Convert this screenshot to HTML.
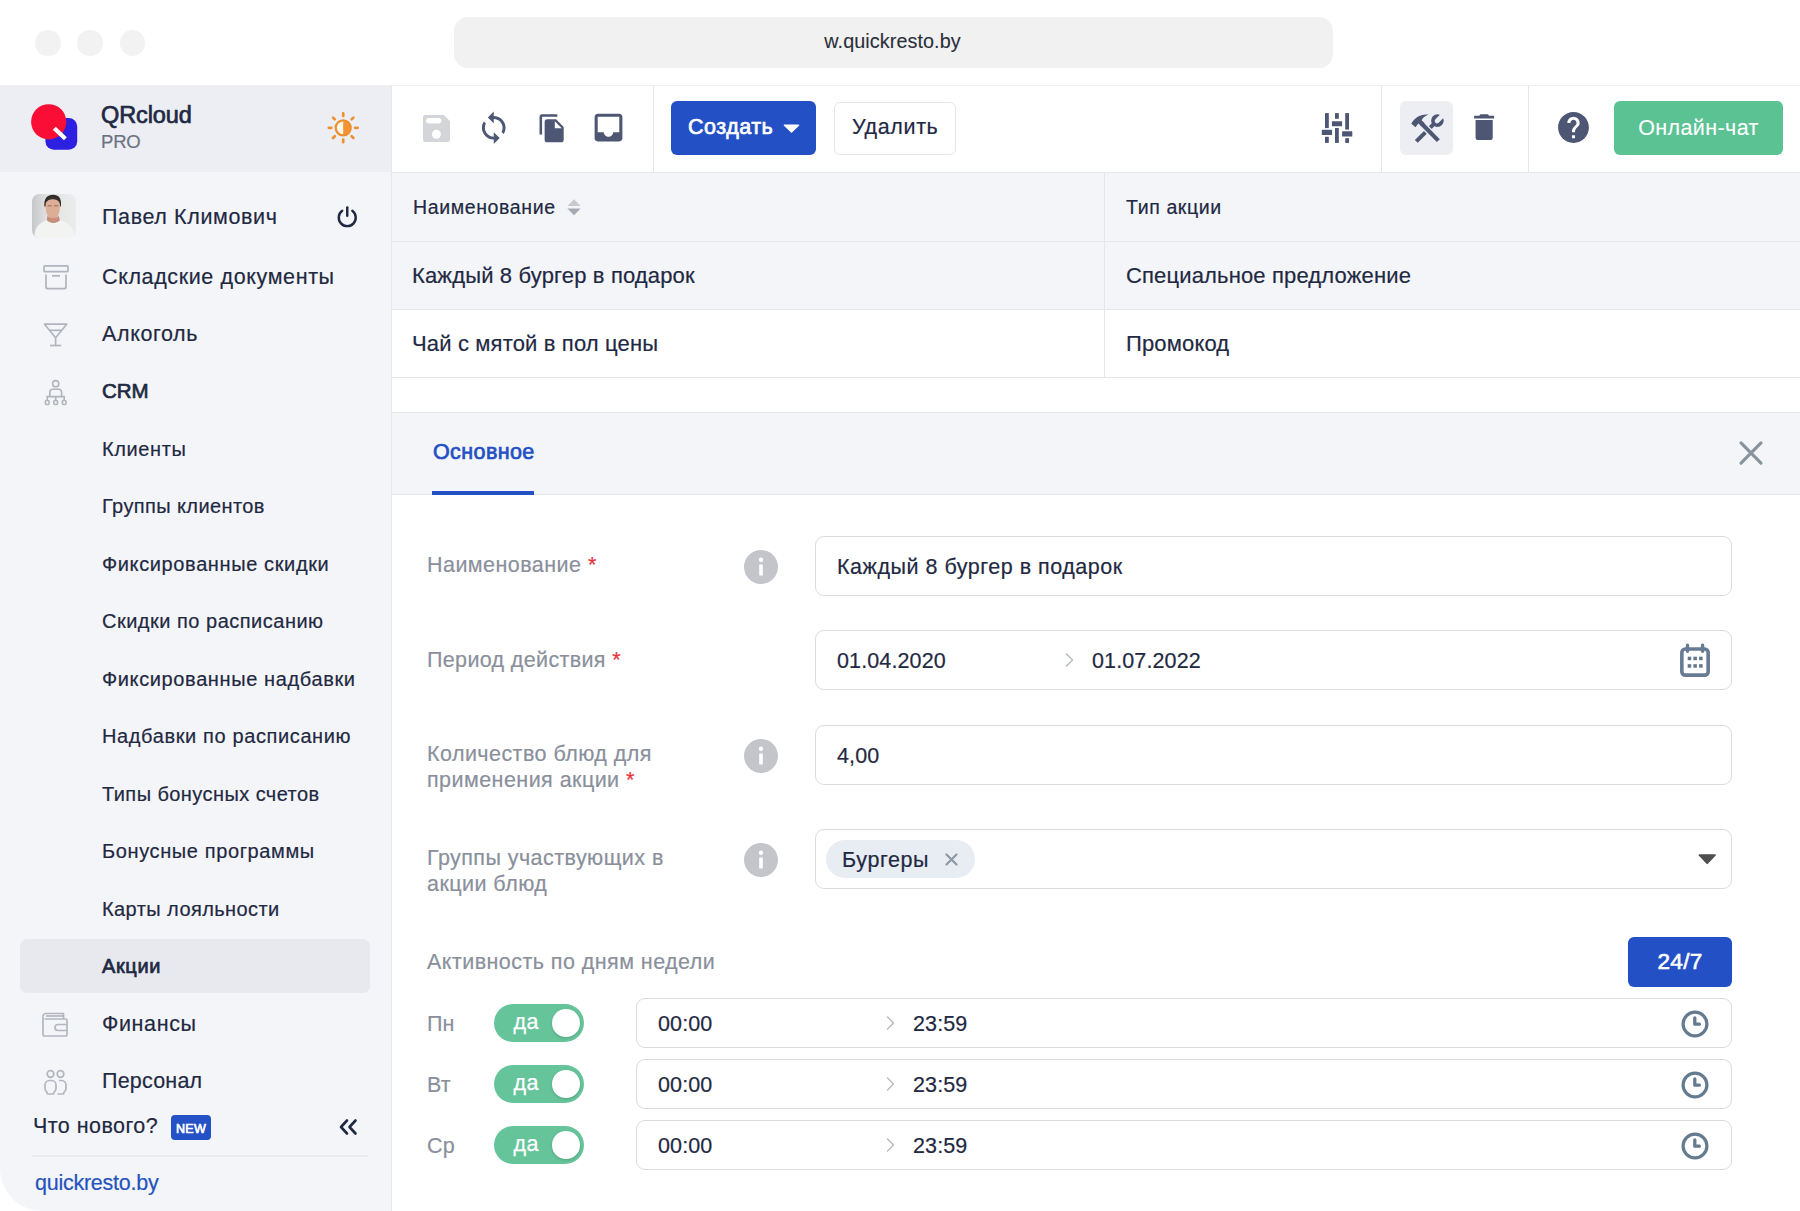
<!DOCTYPE html>
<html lang="ru">
<head>
<meta charset="utf-8">
<title>QRcloud PRO</title>
<style>
html,body{margin:0;padding:0;background:#fff;}
body{width:1800px;height:1211px;position:relative;overflow:hidden;font-family:"Liberation Sans",sans-serif;color:#1f2942;}
.abs{position:absolute;}
.t{position:absolute;white-space:nowrap;line-height:1;transform:translateY(-41%);letter-spacing:0.62px;-webkit-text-stroke:0.2px currentColor;}
.b{font-weight:normal;-webkit-text-stroke:0.7px currentColor;}
.dot{position:absolute;width:25.500px;height:25.500px;border-radius:50%;background:#f2f2f2;top:30.300px;}
#url{position:absolute;left:454px;top:17px;width:878.500px;height:50.800px;border-radius:14px;background:#f1f1f1;}
#side{position:absolute;left:0;top:85px;width:391px;height:1126px;background:#f4f5f9;border-bottom-left-radius:42px;}
#sidehead{position:absolute;left:0;top:0;width:391px;height:87px;background:#eceef4;}
#main{position:absolute;left:391px;top:85px;width:1409px;height:1126px;background:#fff;border-left:1px solid #e6e8ed;box-sizing:border-box;}
.m{font-size:21.5px;left:102px;}
.s{font-size:20px;left:102px;}
.hl{position:absolute;height:1px;background:#e5e6ea;}
.vl{position:absolute;width:1px;background:#e5e6ea;}
.inp{position:absolute;box-sizing:border-box;border:1.5px solid #dadcde;border-radius:9px;background:#fff;}
.lab{color:#8a8f9c;font-size:21.5px;left:427px;letter-spacing:0.45px;}
.num{letter-spacing:0.12px;}
.red{color:#e5343d;}
.val{font-size:21.5px;}
.tog{position:absolute;left:493.600px;width:90.800px;height:37.600px;border-radius:19px;background:#66c49a;margin-top:0.200px;}
.tog i{position:absolute;right:4.700px;top:4.800px;width:27.600px;height:27.600px;border-radius:50%;background:#fff;box-shadow:0 1px 3px rgba(0,0,0,0.180);}
.tog span{position:absolute;left:20px;top:50%;transform:translateY(-49%);color:#fff;font-size:21.500px;line-height:1;letter-spacing:0.300px;-webkit-text-stroke:0.250px #fff;}
.day{color:#8a8f9c;font-size:21.5px;left:427px;letter-spacing:0.100px;}
svg{position:absolute;overflow:visible;}
</style>
</head>
<body>
<!-- browser chrome -->
<div class="dot" style="left:35px"></div><div class="dot" style="left:77.300px"></div><div class="dot" style="left:119.800px"></div>
<div id="url"><span class="t" style="left:0;width:877px;text-align:center;top:23px;font-size:19.800px;letter-spacing:0.080px;color:#2a2f3a;-webkit-text-stroke:0.100px #2a2f3a;">w.quickresto.by</span></div>

<!-- SIDEBAR -->
<div id="side">
<div id="sidehead"></div>
</div>
<!-- logo -->
<svg style="left:28px;top:100px" width="56" height="56" viewBox="0 0 56 56">
<rect x="17.400" y="18" width="31.800" height="31.800" rx="8.500" fill="#2d20e0"/>
<circle cx="20.700" cy="21.800" r="17.600" fill="#fb0e35"/>
<path d="M26.300 28.200L37.400 38.700" stroke="#fff" stroke-width="4.200" stroke-linecap="butt"/>
</svg>
<span class="t b" style="left:101px;top:114px;font-size:23.5px;letter-spacing:-0.1px;">QRcloud</span>
<span class="t" style="left:101px;top:141px;font-size:18.5px;color:#6d7280;letter-spacing:-0.2px;">PRO</span>
<!-- sun -->
<svg style="left:325px;top:110px" width="36" height="36" viewBox="0 0 36 36">
<circle cx="18.2" cy="17.8" r="7.500" fill="#fff7ec"/>
<path d="M18.2 10.3a7.500 7.500 0 0 1 0 15z" fill="#f59332"/>
<g stroke="#ee9030" stroke-width="2.300" stroke-linecap="round" fill="none">
<circle cx="18.2" cy="17.8" r="7.500"/>
<path d="M30.10 17.80L32.60 17.80M26.61 26.21L28.38 27.98M18.20 29.70L18.20 32.20M9.79 26.21L8.02 27.98M6.30 17.80L3.80 17.80M9.79 9.39L8.02 7.62M18.20 5.90L18.20 3.40M26.61 9.39L28.38 7.62" stroke-width="2.700"/>
</g>
</svg>
<!-- avatar -->
<svg style="left:32px;top:194px" width="44" height="44" viewBox="0 0 44 44">
<defs><linearGradient id="avg" x1="0" y1="0" x2="1" y2="0"><stop offset="0" stop-color="#c6c7ca"/><stop offset="0.350" stop-color="#e2e2e3"/><stop offset="1" stop-color="#ececec"/></linearGradient>
<clipPath id="avc"><rect width="44" height="44" rx="7.500"/></clipPath></defs>
<g clip-path="url(#avc)">
<rect width="44" height="44" fill="url(#avg)"/>
<path d="M12.400 12.500C11.500 4.500 15.500 0.800 21 0.800S30 4.500 28.800 12.500z" fill="#2e2c28"/>
<path d="M13.600 11C13.600 6.500 16.500 4.800 20.800 4.800S28 6.500 28 11C28.300 18 26 24.800 20.800 24.800S13.300 18 13.600 11z" fill="#dcae96"/>
<path d="M13.600 9.500C15 6 18 5.200 20.800 5.200S26.500 6 28 9.500C27 4 24 3 20.800 3S14.500 4 13.600 9.500z" fill="#3a322c"/>
<path d="M15.500 21.500C17 25 24.500 25 26.500 21.500L28.500 28L21 32L14.500 27z" fill="#c58f78"/>
<path d="M2.500 44C2.500 33 6 30.500 14.800 25.800C17 30 25.500 30 28.300 25.800C37 30 41.500 33 42.500 44z" fill="#f3f3f1"/>
<path d="M15.800 11.800h4M22 11.800h4" stroke="#8a6a5a" stroke-width="0.900"/>
</g>
</svg>
<span class="t m" style="top:216px;">Павел Климович</span>
<!-- power -->
<svg style="left:335px;top:204.500px" width="24.500" height="24.500" viewBox="0 0 26 26" fill="none" stroke="#1f2942" stroke-width="2.6" stroke-linecap="round">
<path d="M13 2.5v9"/><path d="M7.6 6.2a9 9 0 1 0 10.8 0"/>
</svg>
<!-- box icon -->
<svg style="left:42px;top:263px" width="28" height="28" viewBox="0 0 28 28" fill="none" stroke="#b1b4bc" stroke-width="1.700">
<rect x="2" y="2.900" width="24" height="5.800" rx="0.900"/><path d="M4 11.500v12.200a2 2 0 0 0 2 2h16a2 2 0 0 0 2-2V11.500"/><path d="M10 12.800h8"/>
</svg>
<span class="t m" style="top:276px;">Складские документы</span>
<!-- cocktail -->
<svg style="left:43px;top:322px" width="26" height="26" viewBox="0 0 26 26" fill="none" stroke="#b1b4bc" stroke-width="1.700" stroke-linejoin="round">
<path d="M1.500 2.200h22.200L12.600 15.800z"/><path d="M6.500 8.300h12.200"/><path d="M12.600 15.800v7.500"/><path d="M7 23.500h11.200"/>
</svg>
<span class="t m" style="top:333px;">Алкоголь</span>
<!-- crm -->
<svg style="left:43px;top:379px" width="26" height="28" viewBox="0 0 26 28" fill="none" stroke="#b1b4bc" stroke-width="1.600">
<circle cx="12.700" cy="4.700" r="3.100"/><path d="M6.800 17v-3.800a3 3 0 0 1 3-3h5.800a3 3 0 0 1 3 3V17"/><path d="M4.200 21.500v-3.900h17v3.900M12.700 17.600v3.900"/><rect x="2.400" y="21.500" width="3.600" height="4" rx="0.900"/><rect x="10.900" y="21.500" width="3.600" height="4" rx="0.900"/><rect x="19.400" y="21.500" width="3.600" height="4" rx="0.900"/>
</svg>
<span class="t m b" style="top:389px;font-size:20.5px;letter-spacing:0;">CRM</span>
<span class="t s" style="top:447px;">Клиенты</span>
<span class="t s" style="top:504px;letter-spacing:0.40px;">Группы клиентов</span>
<span class="t s" style="top:562px;">Фиксированные скидки</span>
<span class="t s" style="top:619px;letter-spacing:0.50px;">Скидки по расписанию</span>
<span class="t s" style="top:677px;">Фиксированные надбавки</span>
<span class="t s" style="top:734px;">Надбавки по расписанию</span>
<span class="t s" style="top:792px;letter-spacing:0.43px;">Типы бонусных счетов</span>
<span class="t s" style="top:849px;">Бонусные программы</span>
<span class="t s" style="top:907px;letter-spacing:0.42px;">Карты лояльности</span>
<div class="abs" style="left:20px;top:939px;width:350px;height:54px;border-radius:7px;background:#e7e9ee;"></div>
<span class="t s b" style="top:964px;">Акции</span>
<!-- wallet -->
<svg style="left:41px;top:1011px" width="30" height="28" viewBox="0 0 30 28" fill="none" stroke="#b3b6bf" stroke-width="1.7" stroke-linejoin="round">
<path d="M2 5.500v18a1.500 1.500 0 0 0 1.500 1.500h21a1.500 1.500 0 0 0 1.500-1.500v-14a1.500 1.500 0 0 0-1.500-1.500h-21"/><path d="M2 5.500a3 3 0 0 1 3-3h17.500v5.500"/><path d="M5 5h17"/><path d="M26 13.500h-9a2.500 2.500 0 0 0 0 6h9"/>
</svg>
<span class="t m" style="top:1023px;">Финансы</span>
<!-- people -->
<svg style="left:42px;top:1068px" width="28" height="28" viewBox="0 0 28 28" fill="none" stroke="#b3b6bf" stroke-width="1.7" stroke-linejoin="round">
<circle cx="8.500" cy="6" r="3.300"/><circle cx="18.500" cy="6" r="3.300"/>
<path d="M5.500 26c0-2-2.500-3-2.500-5.500v-3.500a4.500 4.500 0 0 1 4.500-4.500h2a4.500 4.500 0 0 1 4.500 4.500v3.500c0 2.500-2.500 3.500-2.500 5.500z"/><path d="M17 12.500h2.500a4.500 4.500 0 0 1 4.500 4.500v3.500c0 2.500-2.500 3.500-2.500 5.500h-6"/>
</svg>
<span class="t m" style="top:1080px;letter-spacing:0.200px;">Персонал</span>
<span class="t" style="left:33px;top:1124.500px;font-size:21.500px;letter-spacing:0.450px;">Что нового?</span>
<div class="abs" style="left:171px;top:1115px;width:40px;height:25px;border-radius:4px;background:#2451c6;"></div>
<span class="t b" style="left:171px;width:40px;text-align:center;top:1128px;font-size:12.500px;color:#fff;letter-spacing:0.3px;">NEW</span>
<svg style="left:338px;top:1118px" width="20" height="18" viewBox="0 0 20 18" fill="none" stroke="#1f2942" stroke-width="2.600" stroke-linecap="round" stroke-linejoin="round">
<path d="M9 2.500L3 9l6 6.500M17.500 2.500L11.500 9l6 6.500"/>
</svg>
<div class="hl" style="left:32px;top:1155px;width:336px;background:#eaebef;height:2px;"></div>
<span class="t" style="left:35px;top:1181.700px;font-size:21.500px;color:#2553bd;letter-spacing:-0.250px;">quickresto.by</span>

<!-- MAIN -->
<div id="main"></div>
<!-- toolbar -->
<div class="hl" style="left:392px;top:85px;width:1408px;background:#eef0f3;"></div>
<div class="hl" style="left:392px;top:172px;width:1408px;height:1.500px;background:#e7e8eb;"></div>
<div class="vl" style="left:653px;top:86px;height:86px;"></div>
<div class="vl" style="left:1381px;top:86px;height:86px;"></div>
<div class="vl" style="left:1528px;top:86px;height:86px;"></div>
<!-- save -->
<svg style="left:422.800px;top:114.600px" width="27" height="27" viewBox="0 0 27 27">
<path d="M2.200 0h18.600L27 6.200v18.600a2.200 2.200 0 0 1-2.200 2.200H2.200A2.200 2.200 0 0 1 0 24.800V2.200A2.200 2.200 0 0 1 2.200 0z" fill="#d3d5d9"/>
<rect x="3" y="3" width="15.300" height="5.500" rx="2.700" fill="#fff"/><circle cx="13.400" cy="19.300" r="4.500" fill="#fff"/>
</svg>
<!-- refresh -->
<svg style="left:476.300px;top:109.700px" width="35.500" height="35.500" viewBox="0 0 24 24"><path fill="#4d5672" d="M12 4V1L8 5l4 4V6c3.310 0 6 2.690 6 6 0 1.010-.25 1.970-.7 2.800l1.460 1.460A7.930 7.930 0 0 0 20 12c0-4.420-3.580-8-8-8zm0 14c-3.310 0-6-2.690-6-6 0-1.010.25-1.970.7-2.800L5.240 7.740A7.930 7.930 0 0 0 4 12c0 4.420 3.580 8 8 8v3l4-4-4-4v3z"/></svg>
<!-- copy -->
<svg style="left:537px;top:112.500px" width="30.500" height="30.500" viewBox="0 0 24 24"><path fill="#4d5672" d="M16 1H4a2 2 0 0 0-2 2v14h2V3h12V1zm-1 4l6 6v10a2 2 0 0 1-2 2H7.990A2 2 0 0 1 6 21l.010-14a2 2 0 0 1 1.990-2H15zm-1 7h5.500L14 6.500V12z"/></svg>
<!-- inbox -->
<svg style="left:590.300px;top:109.300px" width="37" height="37" viewBox="0 0 24 24"><path fill="#4d5672" d="M19 3H4.990C3.880 3 3.010 3.900 3.010 5L3 19c0 1.100.88 2 1.990 2H19c1.100 0 2-.9 2-2V5c0-1.100-.9-2-2-2zm0 12h-4c0 1.660-1.340 3-3 3s-3-1.340-3-3H4.990V5H19v10z"/></svg>
<!-- create btn -->
<div class="abs" style="left:671px;top:101px;width:145px;height:54px;border-radius:6px;background:#2350c4;"></div>
<span class="t b" style="left:688px;top:125.500px;font-size:21.500px;color:#fff;letter-spacing:0.500px;">Создать</span>
<svg style="left:783px;top:124px" width="17" height="9" viewBox="0 0 17 9"><path d="M1.200 0.500h14.600a0.600 0.600 0 0 1 0.400 1L9 8.600a0.700 0.700 0 0 1-1 0L0.800 1.500a0.600 0.600 0 0 1 0.400-1z" fill="#fff"/></svg>
<div class="abs" style="left:834px;top:101.500px;width:122px;height:53px;border-radius:6px;background:#fff;border:1.500px solid #e4e6eb;box-sizing:border-box;"></div>
<span class="t" style="left:852px;top:125.500px;font-size:21.500px;">Удалить</span>
<!-- sliders -->
<svg style="left:1321px;top:112px" width="32" height="32" viewBox="0 0 32 32" fill="#4d5672">
<rect x="4" y="1.100" width="3.800" height="15"/><rect x="0.800" y="17.800" width="10.300" height="5.200" rx="0.600"/><rect x="4" y="24.800" width="3.800" height="6.100"/>
<rect x="14" y="1.100" width="3.800" height="5.700"/><rect x="10.900" y="9.200" width="10.200" height="5.100" rx="0.600"/><rect x="14" y="16" width="3.800" height="14.900"/>
<rect x="24.200" y="1.100" width="3.800" height="16.500"/><rect x="21.100" y="19.300" width="10.200" height="5.200" rx="0.600"/><rect x="24.200" y="26.200" width="3.800" height="4.700"/>
</svg>
<!-- tools -->
<div class="abs" style="left:1400px;top:101px;width:53px;height:54px;border-radius:6px;background:#eceef3;"></div>
<svg style="left:1411px;top:114px" width="33" height="29" viewBox="0 0 33 29">
<path d="M5.300 27.400L22.500 10.400" stroke="#4d5672" stroke-width="4" fill="none"/>
<circle cx="26.400" cy="6.600" r="6.300" fill="#4d5672"/>
<path d="M26 7L33.500 -0.500" stroke="#eceef3" stroke-width="4.600" stroke-linecap="round"/>
<path d="M10.500 9.500L27.300 26.600" stroke="#eceef3" stroke-width="7" fill="none"/>
<path d="M10.500 9.500L27.300 26.600" stroke="#4d5672" stroke-width="4.200" fill="none"/>
<path fill="#4d5672" d="M0.300 9.800C3.500 3.500 9.500 -0.300 17.600 0.600C13.500 2.200 11.800 4 10.600 6.200L13.600 9.200L10.400 12.400L7.600 9.600C6.500 10.400 5.500 11.600 4.600 13.200z"/>
</svg>
<!-- trash -->
<svg style="left:1467px;top:110px" width="34.300" height="34.300" viewBox="0 0 24 24"><path fill="#4d5672" d="M6 19a2 2 0 0 0 2 2h8a2 2 0 0 0 2-2V7H6v12zM19 4h-3.500l-1-1h-5l-1 1H5v2h14V4z"/></svg>
<!-- help -->
<svg style="left:1554.900px;top:109.400px" width="37" height="37" viewBox="0 0 24 24"><path fill="#4d5672" d="M12 2C6.480 2 2 6.480 2 12s4.480 10 10 10 10-4.480 10-10S17.520 2 12 2zm1 17h-2v-2h2v2zm2.070-7.750l-.9.920C13.450 12.900 13 13.500 13 15h-2v-.5c0-1.100.45-2.100 1.170-2.830l1.240-1.260c.37-.36.590-.86.590-1.410 0-1.100-.9-2-2-2s-2 .9-2 2H8c0-2.210 1.790-4 4-4s4 1.790 4 4c0 .88-.36 1.680-.93 2.250z"/></svg>
<!-- chat -->
<div class="abs" style="left:1614px;top:101px;width:169px;height:54px;border-radius:6px;background:#5bc294;"></div>
<span class="t" style="left:1614px;width:169px;text-align:center;top:126.500px;font-size:21.500px;color:#fff;letter-spacing:0.400px;-webkit-text-stroke:0.100px #fff;">Онлайн-чат</span>
<!-- table -->
<div class="abs" style="left:392px;top:173px;width:1408px;height:136px;background:#f4f5f9;"></div>
<div class="hl" style="left:392px;top:241px;width:1408px;"></div>
<div class="hl" style="left:392px;top:309px;width:1408px;"></div>
<div class="hl" style="left:392px;top:377px;width:1408px;"></div>
<div class="vl" style="left:1104px;top:173px;height:204px;"></div>
<span class="t" style="left:413px;top:205.500px;font-size:19.500px;">Наименование</span>
<svg style="left:566.500px;top:199.300px" width="14" height="17" viewBox="0 0 14 17"><path d="M7 0.300L13.600 7H0.400z" fill="#c8cad0"/><path d="M7 16.300L13.600 9.600H0.400z" fill="#a6a9b3"/></svg>
<span class="t" style="left:1126px;top:205.500px;font-size:19.500px;">Тип акции</span>
<span class="t" style="left:412px;top:274.2px;font-size:22px;letter-spacing:0.150px;">Каждый 8 бургер в подарок</span>
<span class="t" style="left:1126px;top:274.2px;font-size:22px;letter-spacing:0.150px;">Специальное предложение</span>
<span class="t" style="left:412px;top:342.2px;font-size:22px;letter-spacing:0.150px;">Чай с мятой в пол цены</span>
<span class="t" style="left:1126px;top:342.2px;font-size:22px;letter-spacing:0.150px;">Промокод</span>
<!-- panel header -->
<div class="abs" style="left:392px;top:413px;width:1408px;height:81px;background:#f4f5f9;"></div>
<div class="hl" style="left:392px;top:412px;width:1408px;"></div>
<div class="hl" style="left:392px;top:494px;width:1408px;"></div>
<span class="t b" style="left:433px;top:450.500px;font-size:21.500px;color:#2350c4;letter-spacing:0.400px;">Основное</span>
<div class="abs" style="left:432px;top:491px;width:102px;height:4px;background:#2350c4;"></div>
<svg style="left:1739px;top:441px" width="24" height="24" viewBox="0 0 24 24" fill="none" stroke="#87929b" stroke-width="3.100" stroke-linecap="round"><path d="M2 1.800l20 20.400M22 1.800L2 22.200"/></svg>
<!-- FORM -->
<span class="t lab" style="top:564px;">Наименование <span class="red">*</span></span>
<svg style="left:743.600px;top:549.9px" width="34" height="34" viewBox="0 0 34 34"><circle cx="17" cy="17" r="17" fill="#c3c5cb"/><rect x="15.200" y="14.500" width="3.600" height="11" rx="0.500" fill="#fff"/><circle cx="17" cy="9.800" r="2.200" fill="#fff"/></svg>
<div class="inp" style="left:815px;top:536px;width:917px;height:60px;"></div>
<span class="t val" style="left:837px;top:566px;letter-spacing:0.520px;">Каждый 8 бургер в подарок</span>
<span class="t lab" style="top:659px;letter-spacing:0.350px;">Период действия <span class="red">*</span></span>
<div class="inp" style="left:815px;top:630px;width:917px;height:60px;"></div>
<span class="t val num" style="left:837px;top:660px;">01.04.2020</span>
<svg style="left:1065px;top:653px" width="9" height="14" viewBox="0 0 9 14" fill="none" stroke="#b9bcc4" stroke-width="1.500" stroke-linecap="round" stroke-linejoin="round"><path d="M1.500 1l6 6-6 6"/></svg>
<span class="t val num" style="left:1092px;top:660px;">01.07.2022</span>
<!-- calendar -->
<svg style="left:1678px;top:642px" width="34" height="36" viewBox="0 0 34 36" fill="none" stroke="#677b95" stroke-width="3.600" stroke-linejoin="round">
<rect x="3.850" y="6.950" width="26.300" height="26.200" rx="3.500"/><path d="M9.500 3.200v6M24.600 3.200v6" stroke-linecap="round" stroke-width="3.400"/>
<g stroke="none" fill="#64768c"><rect x="9.700" y="14.700" width="3.500" height="3.500"/><rect x="15.400" y="14.700" width="3.500" height="3.500"/><rect x="21.100" y="14.700" width="3.500" height="3.500"/><rect x="9.700" y="22.200" width="3.500" height="3.500"/><rect x="15.400" y="22.200" width="3.500" height="3.500"/><rect x="21.100" y="22.200" width="3.500" height="3.500"/></g>
</svg>
<span class="t lab" style="top:753px;">Количество блюд для</span>
<span class="t lab" style="top:779px;">применения акции <span class="red">*</span></span>
<svg style="left:743.600px;top:738.9px" width="34" height="34" viewBox="0 0 34 34"><circle cx="17" cy="17" r="17" fill="#c3c5cb"/><rect x="15.200" y="14.500" width="3.600" height="11" rx="0.500" fill="#fff"/><circle cx="17" cy="9.800" r="2.200" fill="#fff"/></svg>
<div class="inp" style="left:815px;top:725px;width:917px;height:60px;"></div>
<span class="t val num" style="left:837px;top:755px;">4,00</span>
<span class="t lab" style="top:857px;">Группы участвующих в</span>
<span class="t lab" style="top:883px;">акции блюд</span>
<svg style="left:743.600px;top:842.9px" width="34" height="34" viewBox="0 0 34 34"><circle cx="17" cy="17" r="17" fill="#c3c5cb"/><rect x="15.200" y="14.500" width="3.600" height="11" rx="0.500" fill="#fff"/><circle cx="17" cy="9.800" r="2.200" fill="#fff"/></svg>
<div class="inp" style="left:815px;top:829px;width:917px;height:60px;"></div>
<div class="abs" style="left:826px;top:840px;width:149px;height:38px;border-radius:19px;background:#e8edf3;"></div>
<span class="t val" style="left:842px;top:859px;">Бургеры</span>
<svg style="left:945px;top:853px" width="13" height="13" viewBox="0 0 13 13" fill="none" stroke="#8e97a3" stroke-width="2.200" stroke-linecap="round"><path d="M1.500 1.500l10 10M11.500 1.500l-10 10"/></svg>
<svg style="left:1697.800px;top:854px" width="19" height="11" viewBox="0 0 19 11"><path d="M1.200 0.200h16a0.700 0.700 0 0 1 0.500 1.200L9.900 9.800a1 1 0 0 1-1.400 0L0.700 1.400a0.700 0.700 0 0 1 0.500-1.200z" fill="#4e4e50"/></svg>
<span class="t lab" style="top:961px;">Активность по дням недели</span>
<div class="abs" style="left:1628px;top:937px;width:104px;height:50px;border-radius:6px;background:#2350c4;"></div>
<span class="t" style="left:1628px;width:104px;text-align:center;top:959.500px;font-size:22.500px;color:#fff;letter-spacing:0.300px;-webkit-text-stroke:0.600px #fff;">24/7</span>
<span class="t day" style="top:1023px;">Пн</span>
<div class="tog" style="top:1004px;"><span>да</span><i></i></div>
<div class="inp" style="left:636px;top:998px;width:1096px;height:50px;"></div>
<span class="t val num" style="left:658px;top:1023px;">00:00</span>
<svg style="left:886px;top:1016px" width="9" height="14" viewBox="0 0 9 14" fill="none" stroke="#b9bcc4" stroke-width="1.500" stroke-linecap="round" stroke-linejoin="round"><path d="M1.500 1l6 6-6 6"/></svg>
<span class="t val num" style="left:913px;top:1023px;">23:59</span>
<svg style="left:1681.300px;top:1009.9px" width="28" height="28" viewBox="0 0 28 28" fill="none" stroke="#647b8f" stroke-width="3.200"><circle cx="14" cy="14" r="11.900"/><path d="M13.800 7.900v6.300h4.600" stroke-width="3.300" stroke-linecap="round" stroke-linejoin="round"/></svg>
<span class="t day" style="top:1084px;">Вт</span>
<div class="tog" style="top:1065px;"><span>да</span><i></i></div>
<div class="inp" style="left:636px;top:1059px;width:1096px;height:50px;"></div>
<span class="t val num" style="left:658px;top:1084px;">00:00</span>
<svg style="left:886px;top:1077px" width="9" height="14" viewBox="0 0 9 14" fill="none" stroke="#b9bcc4" stroke-width="1.500" stroke-linecap="round" stroke-linejoin="round"><path d="M1.500 1l6 6-6 6"/></svg>
<span class="t val num" style="left:913px;top:1084px;">23:59</span>
<svg style="left:1681.300px;top:1070.9px" width="28" height="28" viewBox="0 0 28 28" fill="none" stroke="#647b8f" stroke-width="3.200"><circle cx="14" cy="14" r="11.900"/><path d="M13.800 7.900v6.300h4.600" stroke-width="3.300" stroke-linecap="round" stroke-linejoin="round"/></svg>
<span class="t day" style="top:1145px;">Ср</span>
<div class="tog" style="top:1126px;"><span>да</span><i></i></div>
<div class="inp" style="left:636px;top:1120px;width:1096px;height:50px;"></div>
<span class="t val num" style="left:658px;top:1145px;">00:00</span>
<svg style="left:886px;top:1138px" width="9" height="14" viewBox="0 0 9 14" fill="none" stroke="#b9bcc4" stroke-width="1.500" stroke-linecap="round" stroke-linejoin="round"><path d="M1.500 1l6 6-6 6"/></svg>
<span class="t val num" style="left:913px;top:1145px;">23:59</span>
<svg style="left:1681.300px;top:1131.9px" width="28" height="28" viewBox="0 0 28 28" fill="none" stroke="#647b8f" stroke-width="3.200"><circle cx="14" cy="14" r="11.900"/><path d="M13.800 7.900v6.300h4.600" stroke-width="3.300" stroke-linecap="round" stroke-linejoin="round"/></svg>

</body>
</html>
